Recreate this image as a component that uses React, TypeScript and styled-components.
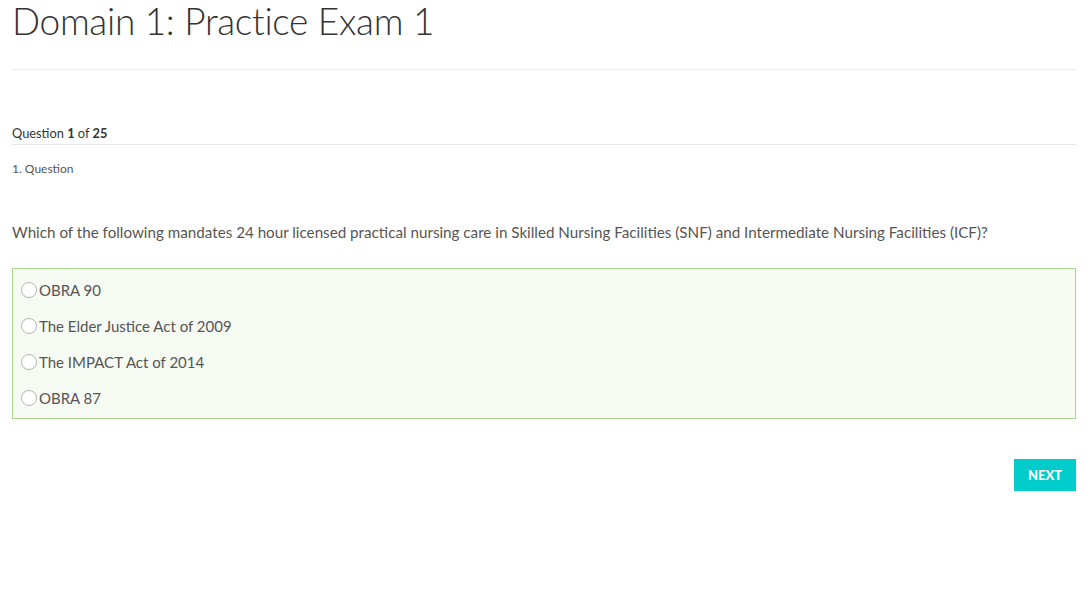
import React from 'react'
import styled, { createGlobalStyle } from 'styled-components'

const GlobalStyle = createGlobalStyle`
  html, body {
    margin: 0;
    padding: 0;
    background: #fff;
  }
  body {
    font-family: Lato, 'Open Sans', sans-serif;
    color: #555;
  }
`

const Page = styled.div`
  padding: 0 15px 0 12px;
`

const Title = styled.h1`
  margin: 0;
  font-size: 37px;
  font-weight: 300;
  line-height: 42px;
  color: #333;
  letter-spacing: -0.3px;
`

const Rule = styled.hr`
  margin: 27px 0 0;
  border: 0;
  border-top: 1px solid #eee;
`

const Header = styled.div`
  margin-top: 55px;
  padding-bottom: 3px;
  border-bottom: 1px solid #e6e6e6;
  font-size: 12.8px;
  line-height: 16px;
  color: #333;

  b {
    font-weight: 700;
  }
`

const QuestionLabel = styled.div`
  margin-top: 16px;
  font-size: 12px;
  line-height: 16px;
  color: #555;
`

const QuestionText = styled.p`
  margin: 45px 0 0;
  font-size: 15.2px;
  line-height: 20px;
  color: #555;
`

const Answers = styled.ul`
  list-style: none;
  margin: 26px 0 0;
  padding: 3px 8px 2px;
  border: 1px solid #acd48c;
  background: #f5faf3;
`

const Answer = styled.li`
  display: flex;
  align-items: center;
  height: 36px;
  font-size: 15px;
  color: #555;
  cursor: pointer;
`

const Radio = styled.span`
  box-sizing: border-box;
  width: 16px;
  height: 16px;
  margin-right: 2px;
  border: 1px solid #b5b5b5;
  border-radius: 50%;
  background: #fff;
`

const Footer = styled.div`
  display: flex;
  justify-content: flex-end;
  margin-top: 40px;
`

const NextButton = styled.button`
  width: 62px;
  height: 32px;
  border: 0;
  background: #00cccc;
  color: #fff;
  font-family: Lato, sans-serif;
  font-size: 13px;
  font-weight: 900;
  cursor: pointer;
`

const answers = ['OBRA 90', 'The Elder Justice Act of 2009', 'The IMPACT Act of 2014', 'OBRA 87']

const App = () => {
  return (
    <Page>
      <GlobalStyle />
      <Title>Domain 1: Practice Exam 1</Title>
      <Rule />
      <Header>
        Question <b>1</b> of <b>25</b>
      </Header>
      <QuestionLabel>1. Question</QuestionLabel>
      <QuestionText>
        Which of the following mandates 24 hour licensed practical nursing care in Skilled Nursing
        Facilities (SNF) and Intermediate Nursing Facilities (ICF)?
      </QuestionText>
      <Answers>
        {answers.map((a) => (
          <Answer key={a}>
            <Radio />
            {a}
          </Answer>
        ))}
      </Answers>
      <Footer>
        <NextButton>NEXT</NextButton>
      </Footer>
    </Page>
  )
}

export default App
